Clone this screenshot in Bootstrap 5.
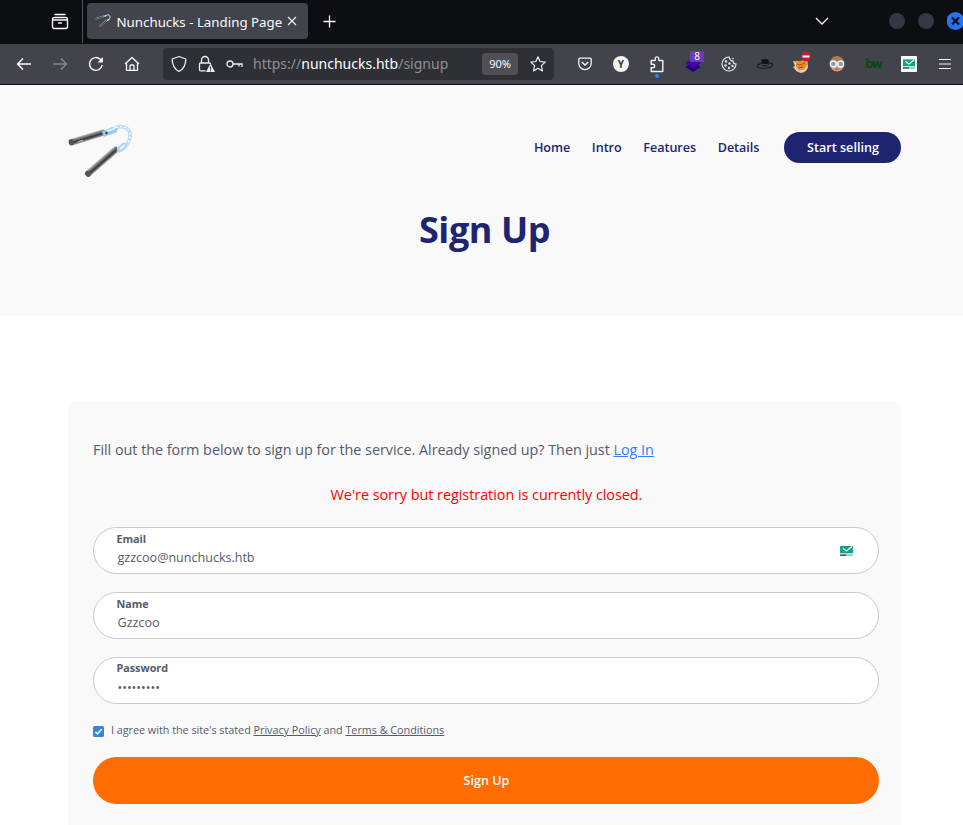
<!DOCTYPE html>
<html lang="en">
<head>
<meta charset="utf-8">
<meta name="viewport" content="width=device-width, initial-scale=1">
<title>Nunchucks - Landing Page</title>
<link href="https://cdn.jsdelivr.net/npm/bootstrap@5.3.0/dist/css/bootstrap.min.css" rel="stylesheet">
<style>
body{font-family:"Open Sans",sans-serif;font-size:14.4px;line-height:23.4px;color:#555b6b;height:825px;overflow:hidden;background:#fff}
svg{display:block;flex:none}
.chrome{font-family:"Noto Sans",sans-serif;color:#fbfbfe}
.tabstrip{height:44px;background:#0d0e11}
.archive{width:83px;border-right:1px solid #54555c;height:43px;padding-left:51px}
.tab{width:221px;height:36px;margin:3px 0 0 4px;background:#42444c;border-radius:4px;padding:0 8px;font-size:13.3px;line-height:36px}
.tab-title{width:167px;margin-left:5.5px;padding-top:1px;white-space:nowrap}
.newtab{margin-left:15px;padding-bottom:1px}
.window-tools{padding-bottom:2px}
.chevron{margin-right:60px}
.dot{width:16px;height:16px;border-radius:50%;background:#343845;margin-right:13px}
.toolbar{height:41px;background:#42444c;border-bottom:1px solid #0b0b10;padding-left:6px}
.tool{width:36px;height:40px;display:flex;align-items:center;justify-content:center;position:relative;flex:none}
.address{width:391px;height:32px;margin:0 13px 0 13px;background:#2f3036;border-radius:4px;padding-left:7px}
.url{font-size:14px;line-height:30px;color:#8f8f95;margin-left:10px;width:229px;white-space:nowrap}
.zoom{width:36px;height:22px;line-height:21px;background:#504f56;border-radius:3px;font-size:11px;text-align:center}
.bookmark{margin-right:8px}
.count{position:absolute;left:15px;top:7px;width:14px;height:11px;background:#6b39bd;font-size:10px;line-height:11px;text-align:center;border-radius:1px}
.ybadge{width:16px;height:16px;border-radius:50%;background:#f4f4f1;color:#36383f;font:bold 10px/16px "Noto Sans",sans-serif;text-align:center}
.bw{font:bold 12px/16px "DejaVu Sans",sans-serif;color:#0a480c;letter-spacing:-1.8px}
.hero{height:231px;background:#f9f9f9;padding:39px 62px 0 68px}
.pages{gap:21.600px;height:31px;margin-top:8px}
.page-link-x{font-size:12.6px;line-height:20px;letter-spacing:-.03px;font-weight:600;color:#1f2470;text-decoration:none}
.start{width:117px;height:31px;line-height:31px;border-radius:16px;background:#1f2470;color:#fff;font-size:12.6px;font-weight:600;text-align:center;margin-left:3px;padding-left:1px}
.hero h1{font-size:36px;line-height:48px;font-weight:700;color:#1f2470;letter-spacing:-.45px;margin:26px 0 0}
.panel{margin:86px 62px 0 68px;height:460px;background:#f9f9f9;border-radius:7px;padding:36px 22px 0 25px}
.panel a{color:#2a7fff}
.intro{letter-spacing:-.029px}
.sorry{color:#f00;margin:22px 0 20px;letter-spacing:-.03px;padding-left:1px}
.field{height:47px;border:1px solid #c8c9cd;border-radius:24px;background:#fff;padding:3px 25px 0 23px;margin-bottom:18px}
.field-label{font-size:10.8px;line-height:15px;font-weight:700;height:15px;margin-left:-.6px}
.field-value{font-size:12.6px;line-height:20px;padding-left:.5px;margin-top:2px;letter-spacing:-.03px}
.secret .field-label{margin-top:-1px}
.secret .field-value{margin-top:3px}
.agree{font-size:10.8px;line-height:18px;margin-top:-1px;letter-spacing:-.02px}
.agree svg{margin:3px 7px 0 0}
.panel .agree a{color:#555b6b}
.submit{height:47px;line-height:47px;border-radius:24px;background:#ff6c02;color:#fff;font-size:12.6px;font-weight:600;border:0;padding:0 0 0 1px;width:100%;margin-top:18px;display:block}
</style>
</head>
<body>
<svg width="0" height="0" class="position-absolute">
  <defs>
    <linearGradient id="steel" x1="0" y1="0" x2="0" y2="1"><stop offset="0" stop-color="#c2c2c5"/><stop offset=".3" stop-color="#77767b"/><stop offset=".6" stop-color="#45434a"/><stop offset="1" stop-color="#a5a6aa"/></linearGradient>
    <symbol id="nunchucks" viewBox="0 0 66 56">
      <path d="M48 3.500c7-2.500 15 1 14 9-.5 5-3 8-6 11" fill="none" stroke="#bcdcf2" stroke-width="3.600"/>
      <path d="M48 3.500c7-2.500 15 1 14 9-.5 5-3 8-6 11" fill="none" stroke="#f4f8fb" stroke-width="1.600" stroke-dasharray="2 2"/>
      <g transform="translate(1 19) rotate(-17)"><rect y="-3.300" width="38" height="6.600" rx="2.500" fill="url(#steel)"/><path d="M4 .6h33" stroke="#403c44" stroke-width="1.500"/><path d="M9 1.300h5" stroke="#c9c9cc"/><rect width="5" height="6" y="-3" rx="2" fill="#55545a"/></g>
      <path d="M34 7.500l10-4.500 6 1.500-1.500 4-13 4.500z" fill="#9dcbed"/><path d="M39 7l8-2.500" stroke="#e9f6ff" stroke-width="1.800"/><circle cx="38.500" cy="9" r="1.200" fill="#29405a"/>
      <g transform="translate(18 51.500) rotate(-41)"><rect y="-3.300" width="42" height="6.600" rx="2.500" fill="url(#steel)"/><path d="M4 .6h36" stroke="#403c44" stroke-width="1.500"/><rect width="5" height="6" y="-3" rx="2" fill="#55545a"/></g>
      <path d="M49 24l6-5.500 4.500 1.500-1 4-7 5-3-2z" fill="#a9d3f0"/><path d="M52 25l5-4" stroke="#eef9ff" stroke-width="1.800"/>
    </symbol>
    <symbol id="mail" viewBox="0 0 14 12"><path d="M0 0h14v8H0z" fill="#0ba28a"/><path d="M3 2.500l4 3 6-5" fill="none" stroke="#fff" stroke-width="1.300"/><path d="M0 9h7v2H0z" fill="#59616e"/><path d="M7 9h7v2H7z" fill="#82cfc3"/></symbol>
  </defs>
</svg>

<header class="chrome">
  <div class="tabstrip d-flex">
    <div class="archive d-flex align-items-center"><svg width="18" height="18" viewBox="0 0 18 18" fill="none" stroke="#fbfbfe" stroke-width="1.400"><path d="M4 1.500h10" stroke-linecap="round"/><path d="M3.500 4.500h11a2 2 0 0 1 2 2v7a2 2 0 0 1-2 2h-11a2 2 0 0 1-2-2v-7a2 2 0 0 1 2-2zM1.500 7h15" stroke-linejoin="round"/><path d="M7 10h4"/></svg></div>
    <div class="tab d-flex align-items-center">
      <svg width="16" height="14"><use href="#nunchucks"/></svg>
      <span class="tab-title">Nunchucks - Landing Page</span>
      <svg width="16" height="16" viewBox="0 0 16 16" stroke="#f4f4f6" stroke-width="1.100"><path d="M4 4l8 8m0-8l-8 8"/></svg>
    </div>
    <div class="newtab d-flex align-items-center"><svg width="13" height="13" viewBox="0 0 13 13" stroke="#fbfbfe" stroke-width="1.300"><path d="M6.500.5v12M.5 6.500h12"/></svg></div>
    <div class="window-tools d-flex align-items-center ms-auto">
      <svg class="chevron" width="14" height="8" viewBox="0 0 14 8" fill="none" stroke="#fbfbfe" stroke-width="1.300"><path d="M1 1l6 6 6-6"/></svg>
      <span class="dot"></span><span class="dot"></span>
      <svg width="16.500" height="18" viewBox="0 0 16.500 18"><circle cx="8.500" cy="9" r="9" fill="#2474f4"/><path d="M5 5.500l7 7m0-7l-7 7" stroke="#10131b" stroke-width="2.300"/></svg>
    </div>
  </div>
  <div class="toolbar d-flex align-items-center">
    <span class="tool"><svg width="16" height="14" viewBox="0 0 16 14" fill="none" stroke="#fbfbfe" stroke-width="1.400"><path d="M15 7H1.500M7 1.500L1.500 7 7 12.500"/></svg></span>
    <span class="tool"><svg width="16" height="14" viewBox="0 0 16 14" fill="none" stroke="#85868c" stroke-width="1.400"><path d="M1 7h13.500M9 1.500L14.500 7 9 12.500"/></svg></span>
    <span class="tool"><svg width="16" height="16" viewBox="0 0 16 16" fill="none" stroke="#fbfbfe" stroke-width="1.400"><path d="M14.200 9A6.400 6.400 0 1 1 12.300 3.300L14 5"/><path d="M15 1v5.500H9.500z" fill="#fbfbfe" stroke="none"/></svg></span>
    <span class="tool"><svg width="16" height="16" viewBox="0 0 16 16" fill="none" stroke="#fbfbfe" stroke-width="1.300" stroke-linejoin="round"><path d="M1 8l7-6.500L15 8M2.500 7v7.300h11V7M6 14.300V10a1 1 0 0 1 1-1h2a1 1 0 0 1 1 1v4.300"/></svg></span>
    <div class="address d-flex align-items-center">
      <svg width="18" height="18" viewBox="0 0 18 18" fill="none" stroke="#ededf0" stroke-width="1.300"><path d="M9 1.500L15.800 4c0 6-2 10-6.800 12.500C4.200 14 2.200 10 2.200 4z" stroke-linejoin="round"/></svg>
      <svg class="ms-2" width="21" height="18" viewBox="0 0 20 18"><path d="M9 15.800H4a1 1 0 0 1-1-1V9a1 1 0 0 1 1-1h9a1 1 0 0 1 1 1M5 8V5a3.500 3.500 0 0 1 7 0v3" fill="none" stroke="#ededf0" stroke-width="1.300"/><path d="M14 8.500l4.500 8.500h-9z" fill="#ededf0"/><path d="M14 11.500v3m0 .7v1" stroke="#2f3036" stroke-width="1.100"/></svg>
      <svg class="ms-2" width="18" height="16" viewBox="0 0 18 16" fill="none" stroke="#ededf0" stroke-width="1.300"><circle cx="5" cy="8" r="3"/><path d="M8 8h9v3M14 8v2.500"/></svg>
      <span class="url">https://<span class="text-white">nunchucks.htb</span>/signup</span>
      <span class="zoom">90%</span>
      <svg class="bookmark ms-auto" width="16" height="16" viewBox="0 0 16 16" fill="none" stroke="#ededf0" stroke-width="1.200" stroke-linejoin="round"><path d="M8 .8l2.100 4.700 5.100.6-3.800 3.500 1 5.300L8 12.300l-4.400 2.600 1-5.300L.8 6.100l5.100-.6z"/></svg>
    </div>
    <span class="tool"><svg width="14" height="14" viewBox="0 0 14 14" fill="none" stroke="#f4f4f6" stroke-width="1.300"><path d="M2 1.200h10a1.200 1.200 0 0 1 1.200 1.200v4a6.200 6.200 0 0 1-12.400 0v-4A1.200 1.200 0 0 1 2 1.200z"/><path d="M3.800 5L7 8l3.200-3" stroke-width="1.500"/></svg></span>
    <span class="tool"><span class="ybadge">Y</span></span>
    <span class="tool"><svg width="16" height="28" viewBox="0 0 16 28"><path d="M2.200 10.500h4V8.700a1.800 1.800 0 0 1 3.600 0v1.800h4v11H2.200v-3.700H4a1.700 1.700 0 0 0 0-3.500H2.200z" fill="none" stroke="#f4f4f6" stroke-width="1.400" stroke-linejoin="round"/><circle cx="8" cy="26" r="2" fill="#2a7fff"/></svg></span>
    <span class="tool"><svg width="16" height="16" viewBox="0 0 16 16"><path d="M0 11l8-5 8 5-8 5z" fill="#25007c"/><path d="M0 7l8-5 8 5-8 5z" fill="#4300a9"/></svg><span class="count">8</span></span>
    <span class="tool"><svg width="16" height="16" viewBox="0 0 16 16"><path d="M8 1a7 7 0 1 0 7 7c-2 0-3-1-3-3-2 0-3-1-4-4z" fill="none" stroke="#e4e4e4" stroke-width="1.200"/><g fill="#e4e4e4"><circle cx="5" cy="5.500" r="1.200"/><circle cx="8.500" cy="7.500" r="1.200"/><circle cx="4.500" cy="9.500" r="1.200"/><circle cx="8" cy="12" r="1.200"/><circle cx="11.500" cy="10" r="1.200"/><circle cx="12" cy="2.500" r=".8"/></g></svg></span>
    <span class="tool"><svg width="16" height="12" viewBox="0 0 16 12"><ellipse cx="8" cy="7.500" rx="7.500" ry="2.600" fill="none" stroke="#111215" transform="rotate(-6 8 7)"/><path d="M4 7l.5-5q3.500-2 7 0l.5 5q-4 2-8 0z" fill="#111215"/><path d="M4 6q4 1.500 8 0" fill="none" stroke="#5a5b60" stroke-width=".8"/></svg></span>
    <span class="tool"><svg width="20" height="26" viewBox="0 0 20 26"><path d="M2 10l5 1 9-3 1 8q-1 5-7 6-5-1-7-5l-1-1 2-1z" fill="#e2ceb7"/><path d="M5 9.500l4 1 6-2 1 6-3 4-5 1-3-4z" fill="#f28b27"/><path d="M6 13l3 1 5-2M7 17l5-1" fill="none" stroke="#74451f" stroke-width=".8"/><circle cx="15" cy="5.500" r="5" fill="#c51b32"/><path d="M11.500 5.500h7" stroke="#fff" stroke-width="2"/></svg></span>
    <span class="tool"><svg width="16" height="16" viewBox="0 0 16 16"><ellipse cx="8" cy="8.500" rx="7" ry="7" fill="#dc9777"/><path d="M1 7a7 7 0 0 1 14 0q-7-4-14 0z" fill="#a8804e"/><circle cx="4.300" cy="8" r="3" fill="#7fa5b4" stroke="#f3f7f8" stroke-width="1.400"/><circle cx="11.700" cy="8" r="3" fill="#7fa5b4" stroke="#f3f7f8" stroke-width="1.400"/><path d="M6 13h4" stroke="#a55d49"/></svg></span>
    <span class="tool bw">bw</span>
    <span class="tool"><svg width="16" height="16" viewBox="0 0 16 16"><rect width="16" height="16" rx="1" fill="#fff"/><use href="#mail" x="2" y="3" width="12" height="11"/></svg></span>
    <span class="tool"><svg width="12" height="12" viewBox="0 0 12 12" stroke="#f4f4f6" stroke-width="1.200"><path d="M0 1.500h12M0 6h12M0 10.500h12"/></svg></span>
  </div>
</header>

<section class="hero">
  <div class="d-flex justify-content-between">
    <svg width="66" height="56"><use href="#nunchucks"/></svg>
    <nav class="d-flex align-items-center pages">
      <a class="page-link-x" href="#">Home</a><a class="page-link-x" href="#">Intro</a><a class="page-link-x" href="#">Features</a><a class="page-link-x" href="#">Details</a><div class="start">Start selling</div>
    </nav>
  </div>
  <h1 class="text-center">Sign Up</h1>
</section>

<main class="panel">
  <div class="intro">Fill out the form below to sign up for the service. Already signed up? Then just <a href="#">Log In</a></div>
  <div class="sorry text-center">We're sorry but registration is currently closed.</div>
  <div class="field d-flex justify-content-between"><div><div class="field-label">Email</div><div class="field-value">gzzcoo@nunchucks.htb</div></div><svg class="align-self-center" width="13" height="11"><use href="#mail"/></svg></div>
  <div class="field"><div class="field-label">Name</div><div class="field-value">Gzzcoo</div></div>
  <div class="field secret"><div class="field-label">Password</div><div class="field-value">•••••••••</div></div>
  <div class="agree d-flex align-items-center"><svg width="11" height="11" viewBox="0 0 11 11"><rect width="11" height="11" rx="1.500" fill="#3584e4"/><path d="M2.300 5.700l2.200 2.200L8.800 3" fill="none" stroke="#fff" stroke-width="1.500"/></svg><span>I agree with the site's stated <a href="#">Privacy Policy</a> and <a href="#">Terms &amp; Conditions</a></span></div>
  <button class="submit" type="button">Sign Up</button>
</main>
<script src="https://cdn.jsdelivr.net/npm/bootstrap@5.3.0/dist/js/bootstrap.bundle.min.js"></script>
</body>
</html>
